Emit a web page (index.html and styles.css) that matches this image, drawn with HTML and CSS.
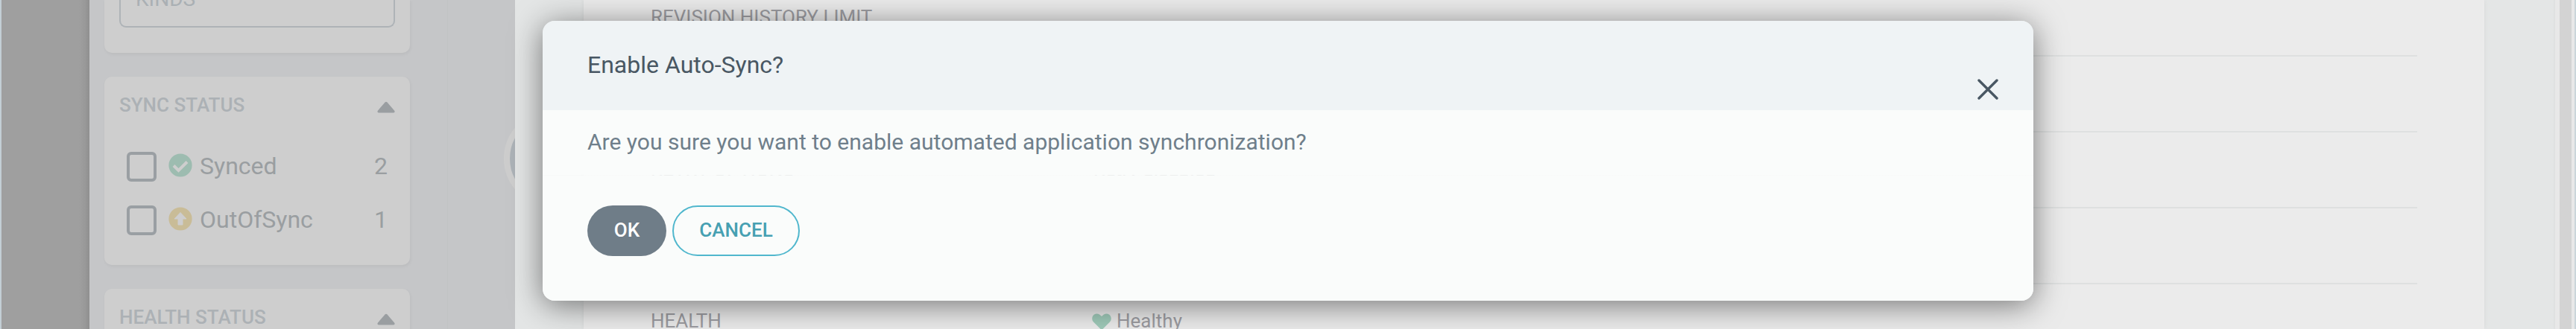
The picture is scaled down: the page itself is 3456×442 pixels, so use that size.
FILE: index.html
```html
<!DOCTYPE html>
<html lang="en">
<head>
<meta charset="utf-8">
<title>Enable Auto-Sync</title>
<link rel="stylesheet" href="styles.css">
</head>
<body>
<div class="app">
  <nav class="nav"></nav>
  <aside class="filters">
    <section class="card card-kinds"><div class="kinds-input">KINDS</div></section>
    <section class="card card-sync">
      <header class="card-head"><span>SYNC STATUS</span><svg class="caret" viewBox="0 0 24 16"><path d="M2 15.5Q-.5 15 1 12.500L10.500 1.500Q12 0 13.500 1.500L23 12.500Q24.500 15 22 15.500Z"/></svg></header>
      <div class="option">
        <span class="checkbox"></span>
        <svg class="status" viewBox="0 0 32 32"><circle class="green" cx="16" cy="16" r="15.600"/><path class="tick" d="M7 16.500L13.500 23L25 11.500"/></svg>
        <span class="label">Synced</span><span class="count">2</span>
      </div>
      <div class="option">
        <span class="checkbox"></span>
        <svg class="status" viewBox="0 0 32 32"><circle class="yellow" cx="16" cy="16" r="15.600"/><path class="arrow" d="M16 7.500L24 16H19V24H13V16H8Z"/></svg>
        <span class="label">OutOfSync</span><span class="count">1</span>
      </div>
    </section>
    <section class="card card-health">
      <header class="card-head"><span>HEALTH STATUS</span><svg class="caret" viewBox="0 0 24 16"><path d="M2 15.5Q-.5 15 1 12.500L10.500 1.500Q12 0 13.500 1.500L23 12.500Q24.500 15 22 15.500Z"/></svg></header>
    </section>
  </aside>
  <div class="gutter"><div class="bubble"></div></div>
  <main class="panel">
    <div class="details">
      <div class="row"><span class="key">REVISION HISTORY LIMIT</span></div>
      <div class="row"></div>
      <div class="row retry"><span class="key">RETRY OPTIONS</span><span>Retry disabled</span></div>
      <div class="row"></div>
      <div class="row"><span class="key">HEALTH</span><svg class="heart" viewBox="0 0 26 23"><path d="M13 22.500L2 11.500C-1.500 7.500.5 1 6 .5C9 .3 11 2 13 4C15 2 17 .3 20 .5C25.500 1 27.500 7.500 24 11.500Z"/></svg><span>Healthy</span></div>
    </div>
  </main>
  <div class="scroll"><div class="thumb"></div></div>
</div>
<div class="modal">
  <header class="modal-head"><h1>Enable Auto-Sync?</h1><svg class="close" viewBox="0 0 28 28"><path d="M2 2L26 26M26 2L2 26"/></svg></header>
  <div class="modal-body"><p>Are you sure you want to enable automated application synchronization?</p></div>
  <footer class="modal-foot"><button class="btn solid">OK</button><button class="btn outline">CANCEL</button></footer>
</div>
</body>
</html>
```
FILE: styles.css
```css
* { box-sizing: border-box; }
body { margin: 0; width: 3456px; height: 442px; overflow: hidden; font-family: Roboto, sans-serif; position: relative; }
svg { display: block; flex: none; }
.app { display: flex; height: 442px; overflow: hidden; background: #c5c6c8; border-left: 2px solid #c3ced5; border-right: 2px solid #cbd5da; }
.nav { width: 118px; flex: none; background: linear-gradient(to right, #9f9f9f 0, #9f9f9f 104px, #999 112px, #8f8f8f 118px); }
.filters { width: 481px; flex: none; padding: 0 50px 0 20px; display: flex; flex-direction: column; gap: 32px; background: #c5c6c8; border-right: 1px solid #c1c3c4; }
.card { flex: none; background: #cecece; border-radius: 10px; padding: 0 20px; box-shadow: 1px 2px 4px rgba(0, 0, 0, .05); }
.card-kinds { height: 71px; border-radius: 0 0 10px 10px; }
.kinds-input { width: 370px; height: 37px; border: 2px solid #aeb3b7; border-top: 0; border-radius: 0 0 9px 9px; padding-left: 20px; font-size: 28px; line-height: 30px; color: #aab0b4; display: flex; align-items: flex-end; padding-bottom: 21px; overflow: hidden; }
.card-sync { height: 253px; }
.card-health { height: 100px; }
.card-head { display: flex; justify-content: space-between; height: 76px; color: #acb1b5; font-size: 26px; font-weight: 500; line-height: 30px; padding-top: 23px; }
.caret { width: 24px; height: 16px; margin-top: 10px; fill: #9a9ea1; }
.option { display: flex; height: 72px; align-items: center; padding: 0 10px; color: #9a9ea1; font-size: 32px; line-height: 38px; }
.card-sync .option { padding-top: 18px; }
.checkbox { width: 40px; height: 40px; border: 4px solid #9a9fa3; border-radius: 6px; flex: none; }
.status { width: 32px; height: 32px; margin: 0 10px 4px 16px; }
.green { fill: #9dbcb0; }
.yellow { fill: #c9bc97; }
.tick { fill: none; stroke: #cecece; stroke-width: 4; }
.arrow { fill: #cecece; stroke: #cecece; stroke-width: 1; stroke-linejoin: round; }
.label, .count { margin-bottom: 2px; }
.label { flex: 1; }
.gutter { width: 90px; flex: none; overflow: hidden; }
.bubble { width: 130px; height: 130px; margin: 148px 0 0 75px; border: 8px solid #cdcdcd; border-radius: 50%; background: #acb2b7; }
.panel { flex: 1; padding: 0 93px 0 92px; background: #e4e6e6; border-right: 2px solid #dfe1e1; }
.details { height: 442px; padding: 0 90px; background: #ebebeb; box-shadow: 0 0 6px rgba(0, 0, 0, .06); overflow: hidden; }
.row { display: flex; height: 102px; border-bottom: 2px solid #dee0e0; padding-top: 34px; font-size: 26px; line-height: 30px; color: #9c9ca1; }
.row:first-child { height: 76px; padding-top: 8px; }
.row.retry { padding-top: 35px; }
.key { width: 594px; flex: none; }
.heart { width: 26px; height: 23px; margin: 5px 7px 0 -2px; fill: #9fcab9; }
.scroll { width: 26px; flex: none; background: #e8e8e8; padding: 0 4px 0 6px; }
.thumb { height: 442px; background: #d3d3d3; }
.modal { position: absolute; left: 728px; top: 28px; width: 2000px; height: 376px; border-radius: 16px; box-shadow: 0 6px 42px rgba(0, 0, 0, .5); overflow: hidden; display: flex; flex-direction: column; }
.modal-head { height: 120px; background: #eff3f5; display: flex; justify-content: space-between; padding: 40px 47px 0 60px; }
.modal-head h1 { margin: 0; font-size: 32px; font-weight: 400; line-height: 38px; color: #495763; }
.close { width: 28px; height: 28px; margin-top: 38px; fill: none; stroke: #495763; stroke-width: 3.4; stroke-linecap: round; }
.modal-body { height: 88px; background: linear-gradient(#fafcfb 87px, rgba(250, 252, 251, .85) 87px); padding: 25px 60px 0; }
.modal-body p { margin: 0; font-size: 30px; line-height: 36px; letter-spacing: .015px; color: #6f7f8b; white-space: nowrap; }
.modal-foot { flex: 1; background: #fafcfb; padding: 40px 60px; display: flex; gap: 8px; }
.btn { height: 68px; padding: 0 0 2px; border-radius: 34px; font: 500 26px/30px Roboto, sans-serif; }
.solid { width: 106px; background: #6f7d88; border: 0; color: #fff; }
.outline { width: 171px; background: transparent; border: 2px solid #50b7cd; color: #46a0b2; }
```
